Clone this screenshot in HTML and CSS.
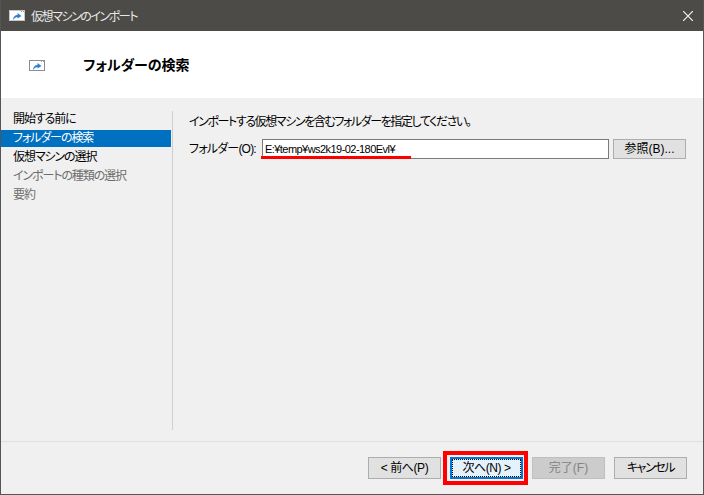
FILE: index.html
```html
<!DOCTYPE html>
<html lang="ja">
<head>
<meta charset="utf-8">
<title>仮想マシンのインポート</title>
<link rel="stylesheet" href="styles.css">
</head>
<body>
<div class="window">
  <div class="titlebar">
    <svg class="icon" width="16" height="11" viewBox="0 0 16 11"><rect x="0.5" y="0.5" width="15" height="10" fill="#fff" stroke="#c8c8c8"/><rect x="12" y="1" width="1" height="1" fill="#999"/><rect x="14" y="1" width="1" height="1" fill="#999"/><path d="M4 10 C4 7 6 5 8.5 5 V3 L12.5 6 L8.5 8.5 V7 C7 7 5.5 8 4 10Z" fill="#2f7fd0"/></svg>
    <span class="title">仮想マシンのインポート</span>
    <svg class="close" width="10" height="10" viewBox="0 0 10 10"><path d="M0 0 L10 10 M10 0 L0 10" stroke="#f4f4f4" stroke-width="1.2" fill="none"/></svg>
  </div>
  <div class="header">
    <svg class="header-icon" width="16" height="11" viewBox="0 0 16 11"><rect x="0.5" y="0.5" width="15" height="10" fill="#fff" stroke="#8c8c8c"/><rect x="12" y="1" width="1" height="1" fill="#aaa"/><rect x="14" y="1" width="1" height="1" fill="#aaa"/><path d="M4 10 C4 7 6 5 8.5 5 V3 L12.5 6 L8.5 8.5 V7 C7 7 5.5 8 4 10Z" fill="#2f7fd0"/></svg>
    <h1 class="heading">フォルダーの検索</h1>
  </div>
  <div class="main">
    <ul class="nav">
      <li class="nav-item">開始する前に</li>
      <li class="nav-item selected">フォルダーの検索</li>
      <li class="nav-item">仮想マシンの選択</li>
      <li class="nav-item disabled">インポートの種類の選択</li>
      <li class="nav-item disabled">要約</li>
    </ul>
    <div class="content">
      <p class="desc">インポートする仮想マシンを含むフォルダーを指定してください。</p>
      <div class="field">
        <label class="label">フォルダー(O):</label>
        <div class="input">E:¥temp¥ws2k19-02-180Evl¥<span class="underline"></span></div>
        <button class="btn browse">参照(B)...</button>
      </div>
    </div>
  </div>
  <div class="footer">
    <button class="btn tight-a">&lt; 前へ(P)</button>
    <button class="btn next tight-a">次へ(N) &gt;</button>
    <button class="btn off">完了(F)</button>
    <button class="btn tight-b">キャンセル</button>
  </div>
</div>
</body>
</html>
```
FILE: styles.css
```css
html, body { margin: 0; padding: 0; }
body { width: 704px; height: 495px; overflow: hidden; }
.window {
  box-sizing: border-box; width: 704px; height: 495px;
  display: flex; flex-direction: column;
  background: #f0f0f0;
  border: 1px solid #555;
  border-top: 0;
  font-family: "Liberation Sans", "Noto Sans CJK JP", sans-serif;
  font-feature-settings: "palt";
  font-size: 12px; color: #000;
}
.titlebar {
  height: 31px; flex: none; background: #4d4b47; color: #e8e8e8;
  display: flex; align-items: center; padding: 0 10px 0 8px;
}
.icon { flex: none; margin-right: 6px; }
.title { flex: 1; font-size: 12px; letter-spacing: -1.45px; }
.close { flex: none; }
.header {
  height: 67px; flex: none; background: #fff;
  display: flex; align-items: center; padding-left: 28px;
}
.header-icon { flex: none; margin: 2px 38px 0 0; }
.heading { margin: 0; font-size: 14px; font-weight: 700; line-height: 20px; }
.main { flex: 1; display: flex; padding-top: 13px; min-height: 0; }
.nav {
  list-style: none; margin: 0; padding: 0; width: 170px; flex: none; letter-spacing: -1.1px;
}
.nav-item { height: 19px; line-height: 17px; padding-left: 12px; }
.nav-item.selected { background: #0070c0; color: #fff; height: 17px; margin-bottom: 2px; }
.nav-item.disabled { color: #6d6d6d; }
.content {
  flex: 1; margin-left: 1px; height: 319px;
  border-left: 1px solid #cfcfcf; padding: 2px 17px 0 16px;
  box-sizing: border-box;
}
.desc { margin: 0 0 8px; line-height: 18px; letter-spacing: -1.41px; }
.field { display: flex; align-items: center; }
.label { width: 73px; flex: none; line-height: 20px; white-space: nowrap; letter-spacing: -0.8px; }
.input {
  position: relative; flex: 1; box-sizing: border-box; height: 20px; margin-right: 4px;
  background: #fff; border: 1px solid #7a7a7a; padding-left: 2px;
  font-size: 11px; letter-spacing: -0.55px; line-height: 18px;
}
.underline {
  position: absolute; left: -2px; top: 16px; width: 150px; height: 3px; background: #ff0000;
}
.btn {
  box-sizing: border-box; width: 73px; height: 22px; padding: 0;
  background: #e1e1e1; border: 1px solid #adadad;
  font: inherit; font-feature-settings: inherit; color: #000; line-height: 18px;
}
.tight-a { letter-spacing: -0.45px; }
.tight-b { letter-spacing: -1.4px; }
.browse { height: 20px; flex: none; }
.footer {
  flex: none; height: 53px; box-sizing: border-box;
  border-top: 1px solid #dfdfdf;
  display: flex; justify-content: flex-end; gap: 9px;
  padding: 15px 16px 0 0;
}
.next {
  position: relative;
  background: #e5f1fb; border: 2px solid #0078d7;
  outline: 1px dotted #000; outline-offset: -3px;
}
.next::after {
  content: ""; position: absolute; left: -9px; top: -8px; right: -7px; bottom: -8px;
  border: 4px solid #ff0000; pointer-events: none;
}
.off { background: #cccccc; border-color: #bfbfbf; color: #838383; }
```
